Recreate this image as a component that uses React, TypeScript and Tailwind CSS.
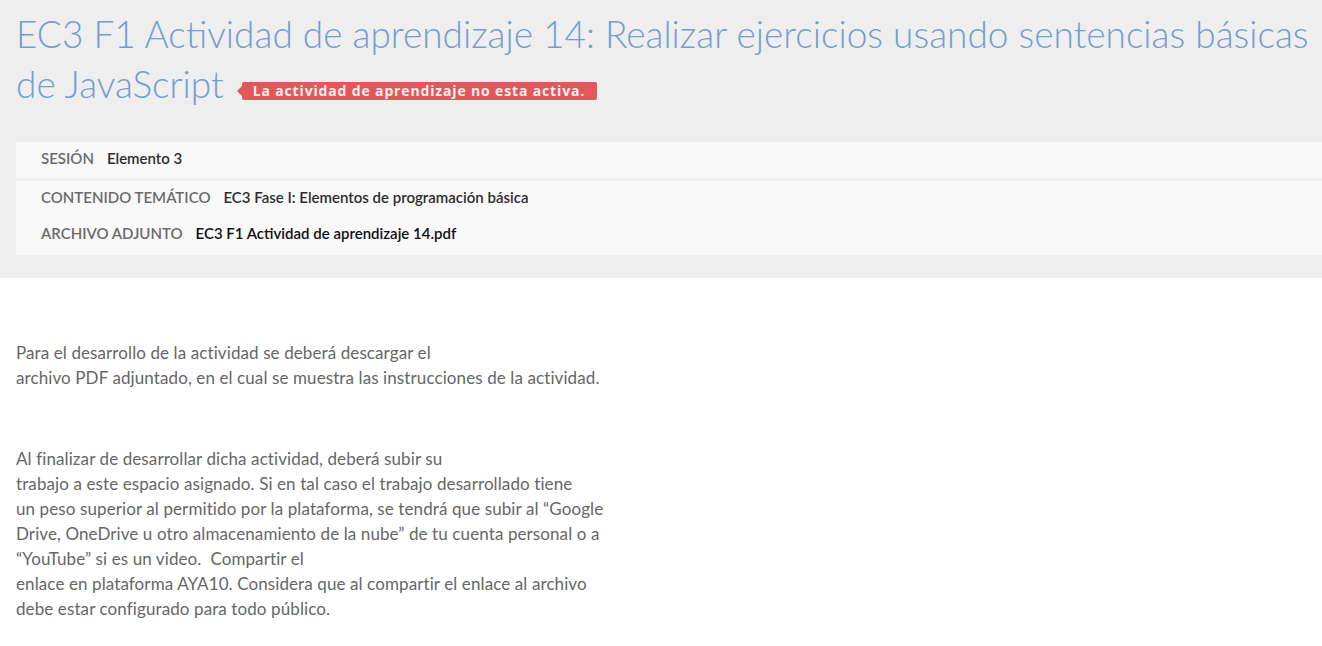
import React from "react";

export default function App() {
  return (
    <div className="min-h-[646px] bg-white" style={{ fontFamily: "Lato, 'Liberation Sans', sans-serif" }}>
      <div className="bg-[#eeeeee] pb-[23px]">
        <h1 className="pl-4 pr-[6px] pt-[9px] pb-[33px] text-[37px] leading-[50px] font-light text-[#749dd0]">
          EC3 F1 Actividad de aprendizaje 14: Realizar ejercicios usando sentencias básicas de JavaScript
          <span
            className="relative ml-[18px] inline-block align-[2px] rounded-[2px] bg-[#e2575a] pl-[11px] pr-[12px] text-[14px] leading-[18px] font-bold tracking-[0.85px] text-[#f8eeee]"
            style={{ fontFamily: "'Open Sans', 'Noto Sans', sans-serif" }}
          >
            <span className="absolute left-[-5px] top-[4px] h-0 w-0 border-y-[5px] border-r-[5px] border-y-transparent border-r-[#e2575a]" />
            La actividad de aprendizaje no esta activa.
          </span>
        </h1>
        <div className="ml-4 flex flex-col gap-[3px] text-[15px]">
          <div className="flex h-[36px] items-center bg-[#f8f8f8] px-[25px] pb-[4px]">
            <span className="mr-[13px] font-semibold uppercase text-[#6b6b6b]">Sesión</span>
            <span className="font-semibold text-[#2d2d2d]">Elemento 3</span>
          </div>
          <div className="flex flex-col bg-[#f8f8f8] px-[25px] py-[1px]">
            <div className="flex h-[36px] items-center pb-[5px]">
              <span className="mr-[13px] font-semibold uppercase text-[#6b6b6b]">Contenido temático</span>
              <span className="font-semibold text-[#2d2d2d]">EC3 Fase I: Elementos de programación básica</span>
            </div>
            <div className="flex h-[36px] items-center pb-[5px]">
              <span className="mr-[13px] font-semibold uppercase text-[#6b6b6b]">Archivo adjunto</span>
              <span className="font-semibold text-[#111111]">EC3 F1 Actividad de aprendizaje 14.pdf</span>
            </div>
          </div>
        </div>
      </div>
      <div className="px-4 pt-[62px] text-[17px] leading-[25px] tracking-[0.1px] text-[#666666]">
        <p>
          Para el desarrollo de la actividad se deberá descargar el
          <br />
          archivo PDF adjuntado, en el cual se muestra las instrucciones de la actividad.
        </p>
        <div className="h-[56px]" />
        <p>
          Al finalizar de desarrollar dicha actividad, deberá subir su
          <br />
          trabajo a este espacio asignado. Si en tal caso el trabajo desarrollado tiene
          <br />
          un peso superior al permitido por la plataforma, se tendrá que subir al “Google
          <br />
          Drive, OneDrive u otro almacenamiento de la nube” de tu cuenta personal o a
          <br />
          “YouTube” si es un video.&nbsp; Compartir el
          <br />
          enlace en plataforma AYA10. Considera que al compartir el enlace al archivo
          <br />
          debe estar configurado para todo público.
        </p>
      </div>
    </div>
  );
}
